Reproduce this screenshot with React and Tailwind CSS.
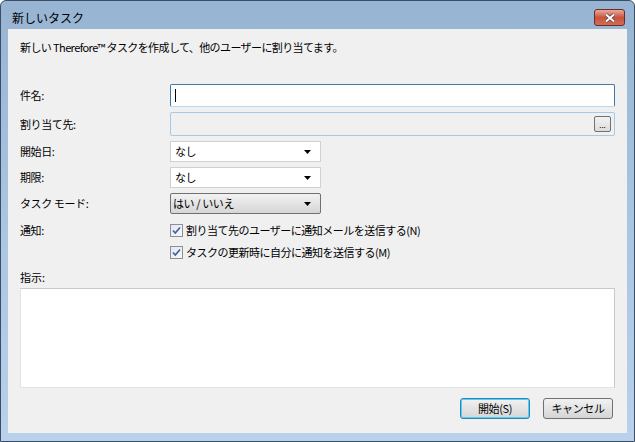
import React from "react";

const font = { fontFamily: '"Noto Sans CJK JP", "Noto Sans", sans-serif' };

function Arrow() {
  return (
    <svg width="7" height="4" viewBox="0 0 7 4" className="shrink-0">
      <path d="M0 0h7L3.5 4z" fill="#000" />
    </svg>
  );
}

function Select({ value, button }) {
  return (
    <div
      className={`flex h-[21px] w-[151px] items-center justify-between pr-[9px] ${
        button
          ? "rounded-[2px] border border-[#707070] bg-gradient-to-b from-[#f2f2f2] to-[#d6d6d6] pl-[2px]"
          : "border border-[#d0d0d0] bg-white pl-[4px]"
      }`}
    >
      <span className="text-[11px] leading-none tracking-[-0.4px] text-black">{value}</span>
      <Arrow />
    </div>
  );
}

function Check({ label }) {
  return (
    <div className="flex h-[16px] items-center gap-[3px]">
      <div className="flex h-[13px] w-[13px] items-center justify-center border border-[#8f8f8f] bg-gradient-to-br from-[#dfe8f5] to-[#f6f9fd]">
        <svg width="9" height="9" viewBox="0 0 9 9">
          <path d="M1 4.5l2.3 2.5L8 1.5" fill="none" stroke="#4a5f97" strokeWidth="1.7" />
        </svg>
      </div>
      <span className="text-[11px] leading-none tracking-[-0.5px] text-black">{label}</span>
    </div>
  );
}

function Row({ label, children, className = "" }) {
  return (
    <div className={`flex items-center ${className}`}>
      <div className="w-[150px] shrink-0 text-[11px] leading-none tracking-[-0.4px] text-black">{label}</div>
      {children}
    </div>
  );
}

export default function App() {
  return (
    <div style={font} className="h-[442px] w-[635px] overflow-hidden bg-white">
      <div className="flex h-full w-full flex-col rounded-t-[6px] border border-[#3a4f66] bg-gradient-to-b from-[#98b4d3] via-[#aac5e2] to-[#b9d1ea]">
        {/* title bar */}
        <div className="flex h-[28px] shrink-0 items-center justify-between pl-[11px] pr-[9px] pt-[5px]">
          <span className="text-[12px] leading-none text-black">新しいタスク</span>
          <div className="flex h-[17px] w-[31px] items-center justify-center rounded-[3px] border border-[#6b2b2b] bg-gradient-to-b from-[#e9a99a] via-[#c8533f] to-[#d36d4f]">
            <svg width="12" height="10" viewBox="0 0 12 10">
              <path d="M2 1.5l8 7M10 1.5l-8 7" stroke="#5a3a3a" strokeWidth="3.4" />
              <path d="M2 1.5l8 7M10 1.5l-8 7" stroke="#fff" strokeWidth="2" />
            </svg>
          </div>
        </div>

        {/* client */}
        <div className="mx-[7px] mb-[8px] flex flex-1 flex-col bg-[#f0f0f0] px-[12px]">
          <div className="mt-[11px] text-[11px] leading-[14px] tracking-[-0.6px] text-black">
            新しい Therefore™ タスクを作成して、他のユーザーに割り当てます。
          </div>

          <Row label="件名:" className="mt-[30px]">
            <div className="flex h-[23px] flex-1 items-center rounded-[2px] border border-[#3d7bad] border-b-[#b7d9ed] bg-white pl-[4px]">
              <div className="h-[13px] w-px bg-black" />
            </div>
          </Row>

          <Row label="割り当て先:" className="mt-[5px]">
            <div className="flex h-[24px] flex-1 items-center justify-end rounded-[2px] border border-[#a8c9e4] bg-[#f0f0f0] pr-[3px]">
              <div className="flex h-[16px] w-[17px] items-end justify-center rounded-[2px] border border-[#707070] bg-gradient-to-b from-[#f2f2f2] to-[#dcdcdc] pb-[2px] text-[8px] leading-none text-black">
                ...
              </div>
            </div>
          </Row>

          <Row label="開始日:" className="mt-[5px]">
            <Select value="なし" />
          </Row>
          <Row label="期限:" className="mt-[5px]">
            <Select value="なし" />
          </Row>
          <Row label="タスク モード:" className="mt-[5px]">
            <Select value="はい / いいえ" button />
          </Row>

          <Row label="通知:" className="mt-[8px]">
            <Check label="割り当て先のユーザーに通知メールを送信する(N)" />
          </Row>
          <div className="ml-[150px] mt-[6px]">
            <Check label="タスクの更新時に自分に通知を送信する(M)" />
          </div>

          <div className="mt-[12px] text-[11px] leading-none text-black">指示:</div>
          <div className="mt-[5px] h-[100px] border border-[#c9c9c9] border-l-[#e3e3e3] border-b-[#e3e3e3] bg-white" />

          <div className="mt-[10px] flex justify-end gap-[13px] pr-[2px]">
            <button className="flex h-[21px] w-[70px] items-center justify-center rounded-[3px] border border-[#3c7fb1] bg-gradient-to-b from-[#f2f2f2] to-[#d5d5d5] text-[11px] leading-none tracking-[-0.4px] text-black shadow-[inset_0_0_0_1px_#48d4f8]">
              開始(S)
            </button>
            <button className="flex h-[21px] w-[70px] items-center justify-center rounded-[3px] border border-[#707070] bg-gradient-to-b from-[#f2f2f2] to-[#d5d5d5] text-[11px] leading-none tracking-[-0.4px] text-black">
              キャンセル
            </button>
          </div>
        </div>
      </div>
    </div>
  );
}
